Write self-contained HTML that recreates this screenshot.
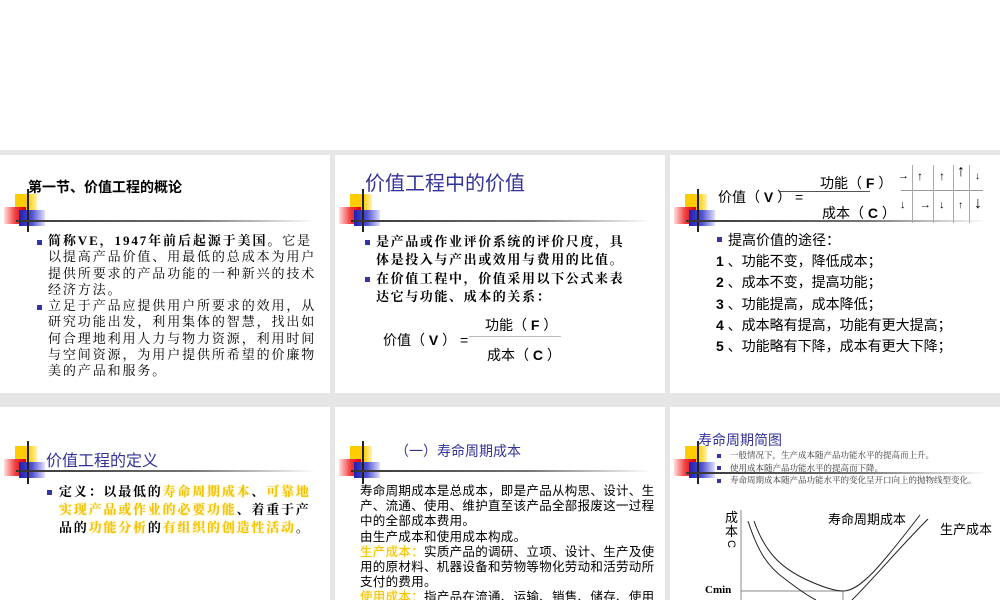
<!DOCTYPE html>
<html><head><meta charset="utf-8"><style>
*{margin:0;padding:0;box-sizing:border-box}
body{width:1000px;height:600px;overflow:hidden;background:#fff;position:relative;font-family:"Liberation Sans","Noto Sans CJK SC",sans-serif}
.band{position:absolute;left:0;top:150px;width:1000px;height:450px;background:#e6e6e6}
.s{position:absolute;background:#fff;overflow:hidden}
.a{position:absolute;white-space:nowrap}
.y{position:absolute;left:15px;top:39px;width:22px;height:19px;background:linear-gradient(90deg,#ffcc00,#ffcc00 60%,#fff2b0)}
.r{position:absolute;left:4px;top:52px;width:22px;height:17px;background:linear-gradient(90deg,#ffe0e0,#f04040 50%,#e00000)}
.b{position:absolute;left:19px;top:55px;width:26px;height:16px;background:linear-gradient(90deg,#2020b0,#5050d0 50%,#e0e0ff)}
.v{position:absolute;left:27px;top:34px;width:2px;height:43px;background:#222}
.h{position:absolute;left:16px;top:65px;width:300px;height:2px;background:linear-gradient(90deg,#333,#777 60%,rgba(200,200,200,0))}
.serif{font-family:"Liberation Serif","Noto Serif CJK SC",serif}
.bul{position:absolute;width:5px;height:5px;background:#3333aa}
.t{color:#333399}
.g{color:#f2c200;text-shadow:0 0 2px #ffe680}
</style></head><body>
<div class="band"></div>

<!-- slide 1 -->
<div class="s" style="left:0;top:155px;width:330px;height:238px">
<div class="y"></div><div class="r"></div><div class="b"></div><div class="v"></div><div class="h"></div>
<div class="a" style="left:28px;top:22px;font-size:14px;font-weight:bold">第一节、价值工程的概论</div>
<div class="bul" style="left:37px;top:85px"></div>
<div class="a serif" style="left:48px;top:78px;font-size:13px;line-height:16.3px;letter-spacing:1.9px"><b>简称VE，1947年前后起源于美国。</b>它是<br>以提高产品价值、用最低的总成本为用户<br>提供所要求的产品功能的一种新兴的技术<br>经济方法。</div>
<div class="bul" style="left:37px;top:150px"></div>
<div class="a serif" style="left:48px;top:143px;font-size:13px;line-height:16.3px;letter-spacing:1.9px">立足于产品应提供用户所要求的效用，从<br>研究功能出发，利用集体的智慧，找出如<br>何合理地利用人力与物力资源，利用时间<br>与空间资源，为用户提供所希望的价廉物<br>美的产品和服务。</div>
</div>

<!-- slide 2 -->
<div class="s" style="left:335px;top:155px;width:330px;height:238px">
<div class="y"></div><div class="r"></div><div class="b"></div><div class="v"></div><div class="h"></div>
<div class="a t" style="left:30px;top:12px;font-size:20px">价值工程中的价值</div>
<div class="bul" style="left:30px;top:85px"></div>
<div class="a serif" style="left:41px;top:78px;font-size:13px;line-height:17.5px;letter-spacing:1.6px;font-weight:bold">是产品或作业评价系统的评价尺度，具<br>体是投入与产出或效用与费用的比值。</div>
<div class="bul" style="left:30px;top:122px"></div>
<div class="a serif" style="left:41px;top:115px;font-size:13px;line-height:17.5px;letter-spacing:1.6px;font-weight:bold">在价值工程中，价值采用以下公式来表<br>达它与功能、成本的关系：</div>
<div class="a" style="left:48px;top:175px;font-size:14px">价值（ <b>V</b> ） =</div>
<div class="a" style="left:150px;top:160px;font-size:14px">功能（ <b>F</b> ）</div>
<div class="a" style="left:134px;top:181px;width:92px;height:1px;background:#bbb"></div>
<div class="a" style="left:152px;top:190px;font-size:14px">成本（ <b>C</b> ）</div>
</div>

<!-- slide 3 -->
<div class="s" style="left:670px;top:155px;width:330px;height:238px">
<div class="y"></div><div class="r"></div><div class="b"></div><div class="v"></div><div class="h"></div>
<div class="a" style="left:48px;top:32px;font-size:14px">价值（ <b>V</b> ） =</div>
<div class="a" style="left:110px;top:36px;width:90px;height:1px;background:#555"></div>
<div class="a" style="left:150px;top:18px;font-size:14px">功能（ <b>F</b> ）</div>
<div class="a" style="left:152px;top:48px;font-size:14px">成本（ <b>C</b> ）</div>
<div class="a" style="left:231px;top:35px;width:82px;height:1px;background:#999"></div>
<div class="a" style="left:242px;top:10px;width:1px;height:58px;background:#aaa"></div>
<div class="a" style="left:263px;top:10px;width:1px;height:58px;background:#aaa"></div>
<div class="a" style="left:283px;top:10px;width:1px;height:58px;background:#aaa"></div>
<div class="a" style="left:299px;top:10px;width:1px;height:58px;background:#aaa"></div>
<div class="a" style="left:228px;top:14px;font-size:11px;line-height:14px">→</div>
<div class="a" style="left:247px;top:14px;font-size:12px">↑</div>
<div class="a" style="left:269px;top:14px;font-size:12px">↑</div>
<div class="a" style="left:287px;top:8px;font-size:16px">↑</div>
<div class="a" style="left:305px;top:16px;font-size:10px">↓</div>
<div class="a" style="left:230px;top:44px;font-size:11px">↓</div>
<div class="a" style="left:250px;top:44px;font-size:11px">→</div>
<div class="a" style="left:269px;top:44px;font-size:11px">↓</div>
<div class="a" style="left:288px;top:45px;font-size:10px">↑</div>
<div class="a" style="left:304px;top:40px;font-size:16px">↓</div>
<div class="bul" style="left:47px;top:82px"></div>
<div class="a" style="left:58px;top:75px;font-size:14px;line-height:21.3px">提高价值的途径：</div>
<div class="a" style="left:46px;top:96px;font-size:14px;line-height:21.3px"><b>1</b> 、功能不变，降低成本；<br><b>2</b> 、成本不变，提高功能；<br><b>3</b> 、功能提高，成本降低；<br><b>4</b> 、成本略有提高，功能有更大提高；<br><b>5</b> 、功能略有下降，成本有更大下降；</div>
</div>

<!-- slide 4 -->
<div class="s" style="left:0;top:407px;width:330px;height:193px">
<div class="y"></div><div class="r"></div><div class="b"></div><div class="v"></div><div class="h" style="top:63px"></div>
<div class="a t" style="left:46px;top:40px;font-size:16px">价值工程的定义</div>
<div class="bul" style="left:47px;top:83px"></div>
<div class="a serif" style="left:59px;top:76px;font-size:13px;line-height:18px;letter-spacing:1.8px;font-weight:bold">定义：以最低的<span class="g">寿命周期成本</span>、<span class="g">可靠地</span><br><span class="g">实现产品或作业的必要功能</span>、着重于产<br>品的<span class="g">功能分析</span>的<span class="g">有组织的创造性活动</span>。</div>
</div>

<!-- slide 5 -->
<div class="s" style="left:335px;top:407px;width:330px;height:193px">
<div class="y"></div><div class="r"></div><div class="b"></div><div class="v"></div><div class="h" style="top:63px"></div>
<div class="a t" style="left:60px;top:34px;font-size:14px">（一）寿命周期成本</div>
<div class="a" style="left:25px;top:77px;font-size:12.5px;line-height:15.2px;letter-spacing:0.3px">寿命周期成本是总成本，即是产品从构思、设计、生<br>产、流通、使用、维护直至该产品全部报废这一过程<br>中的全部成本费用。<br>由生产成本和使用成本构成。<br><span class="g">生产成本：</span>实质产品的调研、立项、设计、生产及使<br>用的原材料、机器设备和劳物等物化劳动和活劳动所<br>支付的费用。<br><span class="g">使用成本：</span>指产品在流通、运输、销售、储存、使用</div>
</div>

<!-- slide 6 -->
<div class="s" style="left:670px;top:407px;width:330px;height:193px">
<div class="y"></div><div class="r"></div><div class="b"></div><div class="v"></div><div class="h" style="top:65px"></div>
<div class="a t" style="left:28px;top:23px;font-size:14px">寿命周期简图</div>
<div class="bul" style="left:47px;top:47px;width:4px;height:4px"></div>
<div class="bul" style="left:47px;top:59px;width:4px;height:4px"></div>
<div class="bul" style="left:47px;top:72px;width:4px;height:4px"></div>
<div class="a serif" style="left:60px;top:42px;font-size:8.5px;line-height:12.5px;color:#333">一般情况下，生产成本随产品功能水平的提高而上升。<br>使用成本随产品功能水平的提高而下降。<br>寿命周期成本随产品功能水平的变化呈开口向上的抛物线型变化。</div>
<div class="a" style="left:55px;top:104px;font-size:13px;line-height:14px;white-space:normal;width:14px">成本</div>
<div class="a" style="left:57px;top:131px;font-size:11px;transform:rotate(90deg)">C</div>
<div class="a" style="left:158px;top:102px;font-size:13px">寿命周期成本</div>
<div class="a" style="left:270px;top:112px;font-size:13px">生产成本</div>
<div class="a serif" style="left:35px;top:177px;font-size:11px;font-weight:bold">Cmin</div>
<svg class="a" style="left:0;top:0" width="330" height="193" viewBox="0 0 330 193">
<line x1="71" y1="103" x2="71" y2="193" stroke="#888" stroke-width="1"/>
<line x1="71" y1="184" x2="173" y2="184" stroke="#888" stroke-width="1"/>
<line x1="173" y1="184" x2="173" y2="193" stroke="#888" stroke-width="1"/>
<path d="M84 114 C95 145 110 160 135 172 C150 179 163 184 173 184 C190 184 210 160 250 108" fill="none" stroke="#222" stroke-width="1"/>
<path d="M78 114 C88 145 98 160 115 172 C128 182 138 189 146 193" fill="none" stroke="#222" stroke-width="1"/>
<path d="M182 193 C205 170 230 140 258 112" fill="none" stroke="#222" stroke-width="1"/>
</svg>
</div>
</body></html>
